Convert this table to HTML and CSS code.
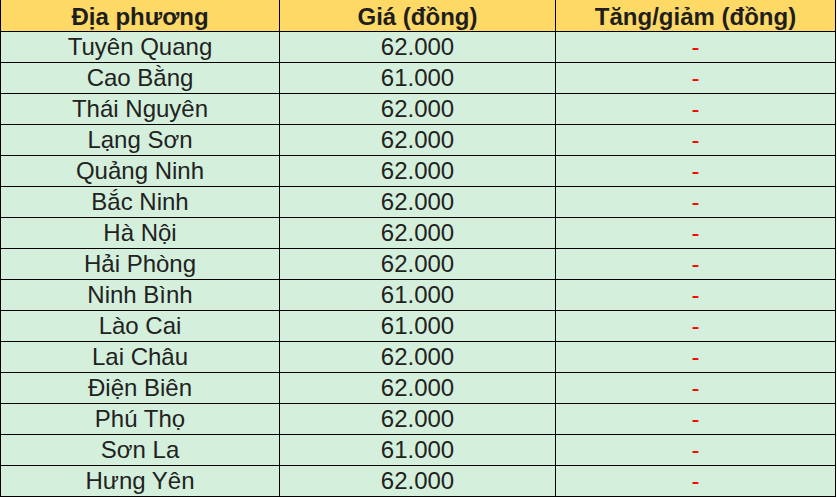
FILE: index.html
```html
<!DOCTYPE html>
<html lang="vi">
<head>
<meta charset="utf-8">
<title>Giá</title>
<link rel="stylesheet" href="styles.css">
</head>
<body>
<table class="price-table">
  <thead>
    <tr><th class="c1">Địa phương</th><th class="c2">Giá (đồng)</th><th class="c3">Tăng/giảm (đồng)</th></tr>
  </thead>
  <tbody>
    <tr><td class="c1">Tuyên Quang</td><td class="c2">62.000</td><td class="c3 dash">-</td></tr>
    <tr><td class="c1">Cao Bằng</td><td class="c2">61.000</td><td class="c3 dash">-</td></tr>
    <tr><td class="c1">Thái Nguyên</td><td class="c2">62.000</td><td class="c3 dash">-</td></tr>
    <tr><td class="c1">Lạng Sơn</td><td class="c2">62.000</td><td class="c3 dash">-</td></tr>
    <tr><td class="c1">Quảng Ninh</td><td class="c2">62.000</td><td class="c3 dash">-</td></tr>
    <tr><td class="c1">Bắc Ninh</td><td class="c2">62.000</td><td class="c3 dash">-</td></tr>
    <tr><td class="c1">Hà Nội</td><td class="c2">62.000</td><td class="c3 dash">-</td></tr>
    <tr><td class="c1">Hải Phòng</td><td class="c2">62.000</td><td class="c3 dash">-</td></tr>
    <tr><td class="c1">Ninh Bình</td><td class="c2">61.000</td><td class="c3 dash">-</td></tr>
    <tr><td class="c1">Lào Cai</td><td class="c2">61.000</td><td class="c3 dash">-</td></tr>
    <tr><td class="c1">Lai Châu</td><td class="c2">62.000</td><td class="c3 dash">-</td></tr>
    <tr><td class="c1">Điện Biên</td><td class="c2">62.000</td><td class="c3 dash">-</td></tr>
    <tr><td class="c1">Phú Thọ</td><td class="c2">62.000</td><td class="c3 dash">-</td></tr>
    <tr><td class="c1">Sơn La</td><td class="c2">61.000</td><td class="c3 dash">-</td></tr>
    <tr><td class="c1">Hưng Yên</td><td class="c2">62.000</td><td class="c3 dash">-</td></tr>
  </tbody>
</table>
</body>
</html>
```

FILE: styles.css
```css
html, body {
  margin: 0;
  padding: 0;
  background: #ffffff;
}

.price-table {
  border-collapse: separate;
  border-spacing: 0;
  table-layout: fixed;
  width: 836px;
  font-family: "Liberation Sans", Arial, sans-serif;
  font-size: 24px;
  color: #222222;
}

.price-table th,
.price-table td {
  padding: 0;
  text-align: center;
  white-space: nowrap;
  border-right: 1px solid #000000;
  border-bottom: 1px solid #000000;
}

.price-table .c1 {
  width: 278px;
  border-left: 1px solid #000000;
}

.price-table .c2 {
  width: 275px;
}

.price-table .c3 {
  width: 279px;
}

.price-table th {
  background: #ffd966;
  font-weight: bold;
  padding-top: 2px;
  line-height: 29px;
  color: #1e1e1e;
}

.price-table td {
  background: #d4efdb;
  line-height: 30px;
}

.price-table td.dash {
  color: #ff0000;
}
```
